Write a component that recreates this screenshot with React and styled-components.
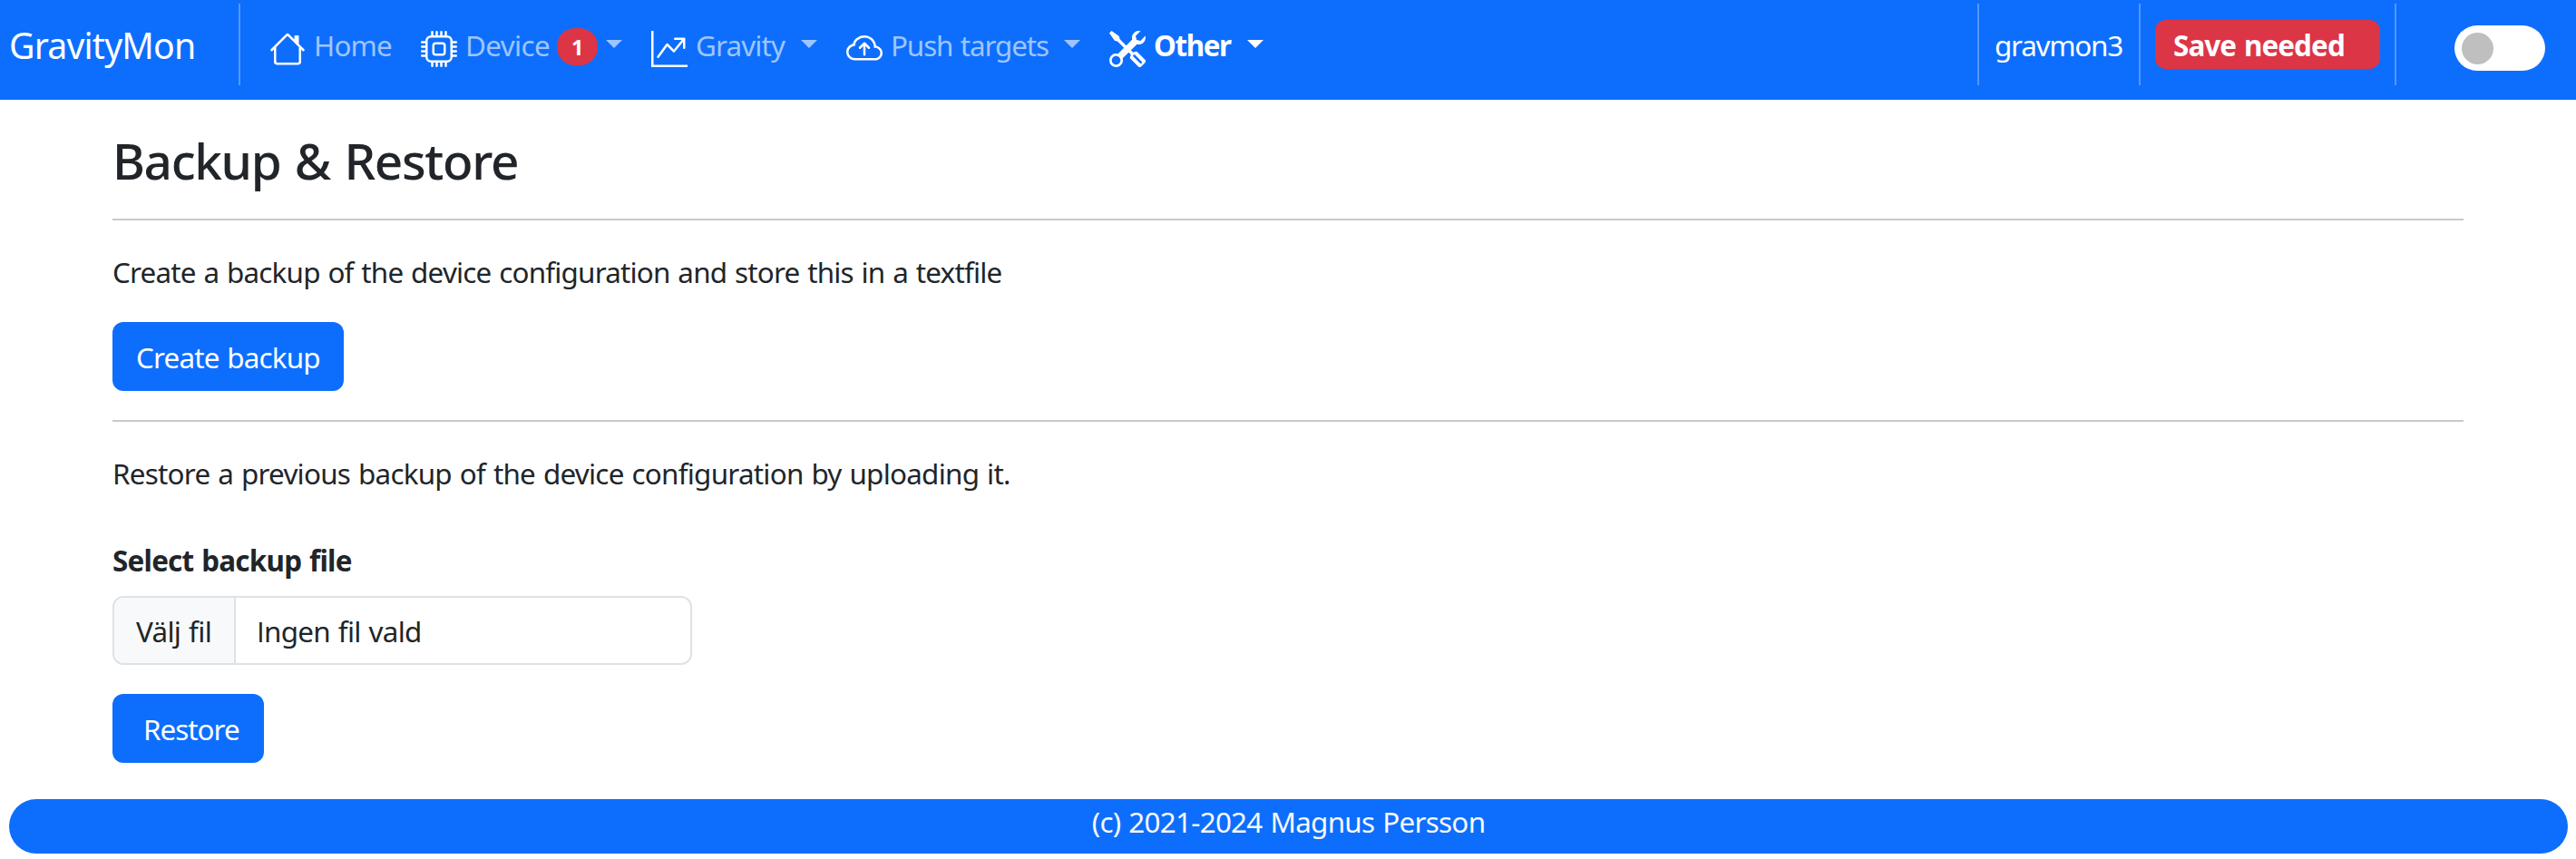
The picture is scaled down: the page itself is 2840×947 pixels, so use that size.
import React from "react";
import styled, { createGlobalStyle } from "styled-components";
import { BsHouse, BsCpu, BsGraphUpArrow, BsCloudArrowUp, BsTools } from "react-icons/bs";

const GlobalStyle = createGlobalStyle`
  *, *::before, *::after { box-sizing: border-box; }
  body {
    margin: 0;
    background: #fff;
    color: #212529;
    font-family: "Noto Sans", sans-serif;
    font-size: 31.36px;
    line-height: 48px;
    word-spacing: 1.4px;
  }
`;

const Navbar = styled.header`
  display: flex;
  align-items: center;
  height: 110px;
  padding: 0 34px 10px 10px;
  background: #0d6efd;
  color: #fff;
`;

const Brand = styled.a`
  width: 253px;
  font-size: 39.2px;
  line-height: 60px;
  letter-spacing: -0.82px;
  white-space: nowrap;
`;

const Rule = styled.span`
  flex: none;
  width: 2px;
  height: 90px;
  margin-top: -2px;
  background: #5597fe;
`;

const NavList = styled.nav`
  display: flex;
  align-items: center;
  gap: 32px;
  margin-left: 32px;
  margin-right: auto;
`;

const NavLink = styled.a`
  display: flex;
  align-items: center;
  width: ${(p) => p.$width}px;
  color: ${(p) => (p.$active ? "#fff" : "#9ec5fe")};
  font-weight: ${(p) => (p.$active ? 700 : 400)};

  svg:first-child {
    flex: none;
    width: 40px;
    height: 40px;
    margin: 8px 9px 0 0;
    color: #fff;
  }
`;

const Text = styled.span`
  white-space: nowrap;
  letter-spacing: ${(p) => p.$track || 0}px;
`;

const Caret = styled.span`
  margin: -3px 0 0 auto;
  border: 9px solid transparent;
  border-top-color: currentColor;
  border-bottom: 0;
`;

const CountBadge = styled.span`
  display: flex;
  justify-content: center;
  width: 45px;
  height: 41px;
  margin: 3px 0 0 8px;
  border-radius: 20px;
  background: #dc3545;
  color: #fff;
  font-size: 23.5px;
  font-weight: 700;
  line-height: 43px;
`;

const HostName = styled.span`
  width: 176px;
  padding-left: 17px;
  letter-spacing: -1.24px;
  white-space: nowrap;
`;

const SaveBadge = styled.span`
  width: 248px;
  height: 54px;
  margin: -2px 16px 0;
  padding: 4px 0 0 20px;
  border-radius: 12px;
  background: #dc3545;
  font-weight: 700;
  letter-spacing: -0.87px;
  white-space: nowrap;
`;

const Switch = styled.span`
  display: flex;
  align-items: center;
  width: 100px;
  height: 50px;
  margin: 6px 0 0 64px;
  padding: 0 7.5px;
  border-radius: 25px;
  background: #fff;

  &::before {
    content: "";
    width: 35px;
    height: 35px;
    border-radius: 50%;
    background: #bfbfbf;
  }
`;

const Page = styled.main`
  display: flex;
  flex-direction: column;
  align-items: flex-start;
  padding: 33px 124px 40px;
`;

const Title = styled.h1`
  margin: 0 0 31px;
  font-size: 54.9px;
  font-weight: 500;
  line-height: 67px;
  letter-spacing: -1.33px;
  word-spacing: 2.5px;
`;

const Divider = styled.hr`
  width: 100%;
  height: 2px;
  margin: 0 0 32px;
  border: 0;
  background: #c8c9ca;
`;

const Paragraph = styled.p`
  margin: 0 0 ${(p) => p.$gap}px;
  padding-top: 1px;
  line-height: 47px;
  letter-spacing: ${(p) => p.$track}px;
`;

const Button = styled.button`
  width: ${(p) => p.$width}px;
  height: 76px;
  margin-bottom: ${(p) => p.$gap || 0}px;
  padding: 1px 0 0 ${(p) => p.$indent}px;
  border: 0;
  border-radius: 12px;
  background: #0d6efd;
  color: #fff;
  font: inherit;
  letter-spacing: ${(p) => p.$track}px;
  word-spacing: inherit;
  text-align: left;
`;

const Label = styled.label`
  margin-bottom: 16px;
  padding-top: 1px;
  line-height: 47px;
  font-weight: 700;
  letter-spacing: -0.74px;
`;

const FileField = styled.div`
  display: flex;
  width: 639px;
  height: 76px;
  margin-bottom: 32px;
  border: 2px solid #dee2e6;
  border-radius: 12px;
  overflow: hidden;
  line-height: 74px;
`;

const FileButton = styled.span`
  width: 134px;
  padding-left: 24px;
  border-right: 2px solid #dee2e6;
  background: #f8f9fa;
  letter-spacing: -0.68px;
`;

const FileName = styled.span`
  padding-left: 23px;
  letter-spacing: -0.7px;
`;

const SansCapital = styled.span`
  font-family: "Open Sans", sans-serif;
`;

const Footer = styled.footer`
  height: 60px;
  margin: 0 9px 0 10px;
  border-radius: 30px;
  background: #0d6efd;
  color: #f8f9fa;
  text-align: center;
  letter-spacing: -0.7px;
  line-height: 50px;
`;

const links = [
  { label: "Home", icon: BsHouse, width: 135, track: -0.85, menu: false },
  { label: "Device", icon: BsCpu, width: 222, track: -0.6, menu: true, count: 1 },
  { label: "Gravity", icon: BsGraphUpArrow, width: 183, track: -0.86, menu: true },
  { label: "Push targets", icon: BsCloudArrowUp, width: 258, track: -1.1, menu: true },
  { label: "Other", icon: BsTools, width: 170, track: -1.39, menu: true, active: true },
];

export default function App() {
  return (
    <>
      <GlobalStyle />
      <Navbar>
        <Brand>GravityMon</Brand>
        <Rule />
        <NavList>
          {links.map(({ label, icon: Icon, width, track, menu, count, active }) => (
            <NavLink key={label} $width={width} $active={active}>
              <Icon />
              <Text $track={track}>{label}</Text>
              {count && <CountBadge>{count}</CountBadge>}
              {menu && <Caret />}
            </NavLink>
          ))}
        </NavList>
        <Rule />
        <HostName>gravmon3</HostName>
        <Rule />
        <SaveBadge>Save needed</SaveBadge>
        <Rule />
        <Switch />
      </Navbar>
      <Page>
        <Title>Backup &amp; Restore</Title>
        <Divider />
        <Paragraph $gap={32} $track={-0.79}>
          Create a backup of the device configuration and store this in a textfile
        </Paragraph>
        <Button $width={255} $indent={26} $gap={32} $track={-0.81}>Create backup</Button>
        <Divider />
        <Paragraph $gap={48} $track={-0.73}>
          Restore a previous backup of the device configuration by uploading it.
        </Paragraph>
        <Label>Select backup file</Label>
        <FileField>
          <FileButton>Välj fil</FileButton>
          <FileName>
            <SansCapital>I</SansCapital>ngen fil vald
          </FileName>
        </FileField>
        <Button $width={167} $indent={34} $track={-0.98}>Restore</Button>
      </Page>
      <Footer>(c) 2021-2024 Magnus Persson</Footer>
    </>
  );
}
